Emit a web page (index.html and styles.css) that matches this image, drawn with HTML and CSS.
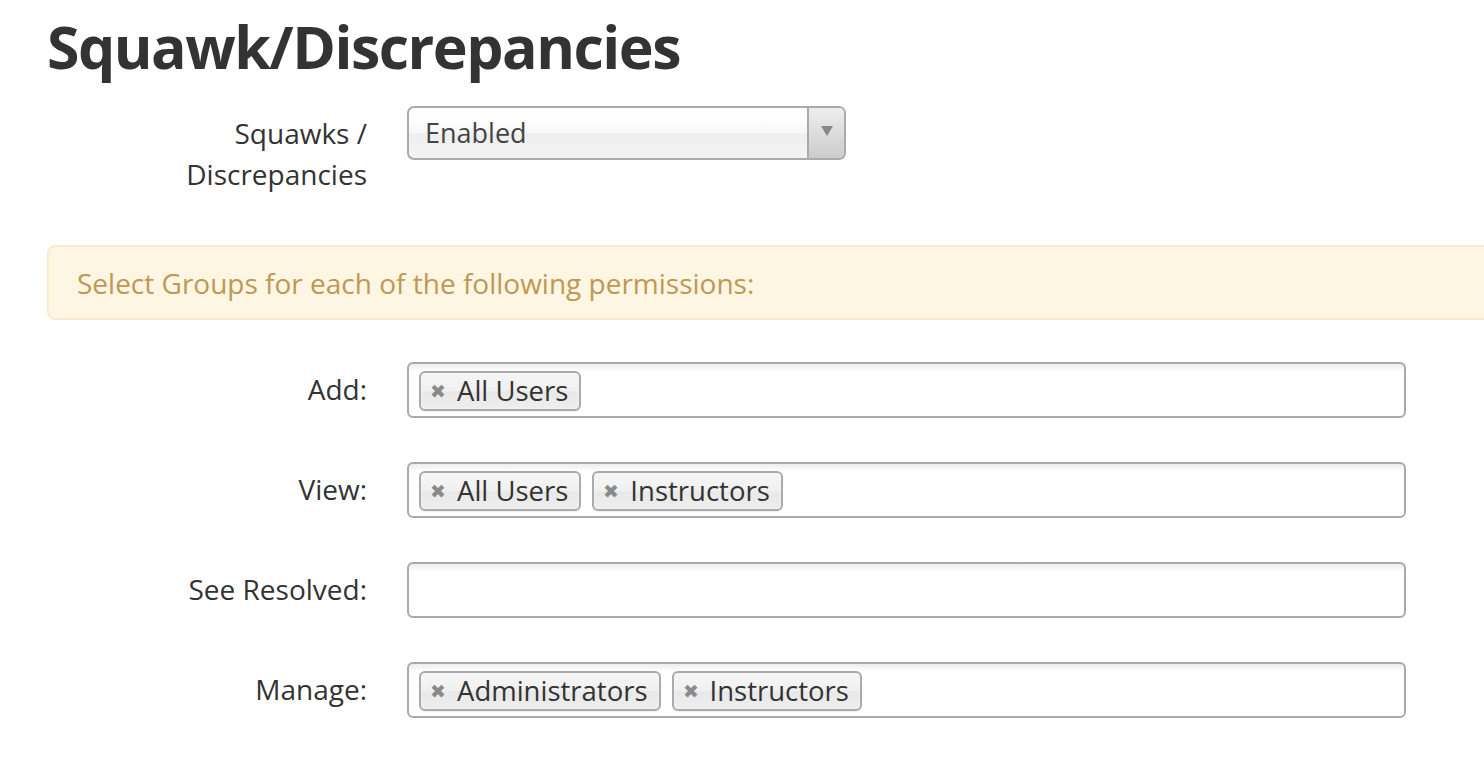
FILE: index.html
```html
<!DOCTYPE html>
<html lang="en">
<head>
  <meta charset="UTF-8">
  <title>Squawk/Discrepancies</title>
  <link rel="stylesheet" href="styles.css">
</head>
<body>
<div class="page">
  <h1>Squawk/Discrepancies</h1>

  <div class="form-row first">
    <label class="control-label">Squawks /<br>Discrepancies</label>
    <div class="controls">
      <div class="chosen-single">
        <span>Enabled</span>
        <div class="arrow"><b></b></div>
      </div>
    </div>
  </div>

  <div class="alert">Select Groups for each of the following permissions:</div>

  <div class="form-row">
    <label class="control-label">Add:</label>
    <div class="controls">
      <ul class="chosen-multi">
        <li class="tag"><span class="x">&#10006;</span>All Users</li>
      </ul>
    </div>
  </div>

  <div class="form-row">
    <label class="control-label">View:</label>
    <div class="controls">
      <ul class="chosen-multi">
        <li class="tag"><span class="x">&#10006;</span>All Users</li>
        <li class="tag"><span class="x">&#10006;</span>Instructors</li>
      </ul>
    </div>
  </div>

  <div class="form-row">
    <label class="control-label">See Resolved:</label>
    <div class="controls">
      <ul class="chosen-multi"></ul>
    </div>
  </div>

  <div class="form-row">
    <label class="control-label">Manage:</label>
    <div class="controls">
      <ul class="chosen-multi">
        <li class="tag"><span class="x">&#10006;</span>Administrators</li>
        <li class="tag"><span class="x">&#10006;</span>Instructors</li>
      </ul>
    </div>
  </div>
</div>
</body>
</html>
```

FILE: styles.css
```css
* { box-sizing: border-box; }

body {
  margin: 0;
  background: #fff;
  color: #333;
  font-family: 'Open Sans', sans-serif;
  font-size: 28px;
  line-height: 40px;
  overflow: hidden;
}

.page {
  padding: 6px 0 0 47px;
  width: 1540px;
}

h1 {
  margin: 0 0 20px;
  font-size: 59px;
  line-height: 80px;
  font-weight: 700;
  letter-spacing: -1.5px;
  color: #333;
}

.form-row {
  display: flex;
  align-items: flex-start;
  margin-bottom: 44px;
}

.form-row.first { margin-bottom: 50px; }

.control-label {
  width: 320px;
  padding-top: 7px;
  text-align: right;
  font-size: 28px;
  line-height: 41px;
  color: #333;
}

.controls {
  margin-left: 40px;
}

.chosen-single {
  display: flex;
  width: 439px;
  height: 54px;
  border: 2px solid #aaa;
  border-radius: 7px;
  background: linear-gradient(#fff 20%, #f6f6f6 50%, #eee 52%, #f4f4f4 100%);
  overflow: hidden;
}

.chosen-single span {
  flex: 1;
  padding: 5px 0 0 16px;
  font-size: 27px;
  color: #444;
}

.chosen-single .arrow {
  width: 37px;
  border-left: 2px solid #aaa;
  background: linear-gradient(#eee, #ccc);
  display: flex;
  align-items: center;
  justify-content: center;
}

.chosen-single .arrow b {
  width: 0; height: 0;
  border-left: 6px solid transparent;
  border-right: 6px solid transparent;
  border-top: 10px solid #888;
  margin-top: -4px;
}

.alert {
  width: 1460px;
  height: 75px;
  margin-bottom: 42px;
  padding: 19px 0 0 28px;
  background: #fcf6e3;
  border: 2px solid #fbebcc;
  border-radius: 8px;
  color: #c09853;
  font-size: 28px;
  line-height: 34px;
}

.chosen-multi {
  display: flex;
  gap: 11px;
  width: 999px;
  height: 56px;
  margin: 0;
  padding: 7px 10px;
  list-style: none;
  border: 2px solid #aaa;
  border-radius: 6px;
  background: linear-gradient(#eee 1%, #fff 15%);
}

.tag {
  display: flex;
  align-items: center;
  height: 40px;
  padding: 0 11px 0 9px;
  border: 2px solid #aaa;
  border-radius: 6px;
  background: linear-gradient(#f4f4f4 20%, #f0f0f0 50%, #e8e8e8 52%, #eee 100%);
  box-shadow: 0 0 2px #fff inset, 0 1px 0 rgba(0,0,0,0.05);
  font-size: 27.5px;
  color: #333;
  line-height: 36px;
}

.tag .x {
  font-size: 19px;
  color: #8a8a8a;
  margin-right: 11px;
}
```
